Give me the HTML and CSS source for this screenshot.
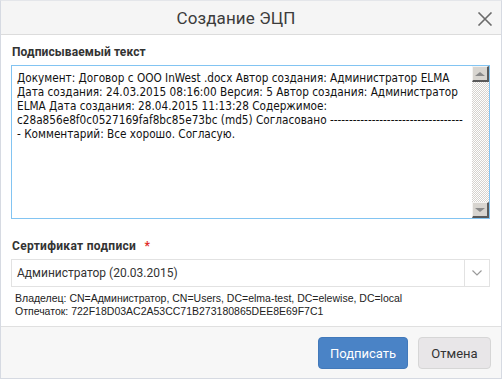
FILE: index.html
```html
<!DOCTYPE html>
<html lang="ru">
<head>
    <meta charset="UTF-8">
    <title>Создание ЭЦП</title>
    <link rel="stylesheet" href="styles.css">
</head>
<body>
    <div class="dialog">
        <div class="dialog-header">
            <span class="dialog-title">Создание ЭЦП</span>
            <svg class="close" width="16" height="14" viewBox="0 0 16 14">
                <path d="M1.5 0.5 L14.5 13.5 M14.5 0.5 L1.5 13.5" stroke="#6b6b6b" stroke-width="1.6" fill="none"/>
            </svg>
        </div>
        <div class="dialog-body">
            <div class="field-label">Подписываемый текст</div>
            <div class="memo">
                <div class="memo-text">
                    <div class="memo-line">Документ: Договор с ООО InWest .docx Автор создания: Администратор ELMA</div>
                    <div class="memo-line">Дата создания: 24.03.2015 08:16:00 Версия: 5 Автор создания: Администратор</div>
                    <div class="memo-line">ELMA Дата создания: 28.04.2015 11:13:28 Содержимое:</div>
                    <div class="memo-line">c28a856e8f0c0527169faf8bc85e73bc (md5) Согласовано -----------------------------------</div>
                    <div class="memo-line">- Комментарий: Все хорошо. Согласую.</div>
                </div>
                <div class="scrollbar">
                    <div class="scroll-btn"><span class="arrow-up"></span></div>
                    <div class="scroll-track"></div>
                    <div class="scroll-btn"><span class="arrow-down"></span></div>
                </div>
            </div>

            <div class="field-label cert-label">Сертификат подписи <span class="required">*</span></div>
            <div class="select">
                <div class="select-value">Администратор (20.03.2015)</div>
                <div class="select-toggle">
                    <svg width="10" height="6" viewBox="0 0 10 6">
                        <path d="M0.5 0.5 L5 5 L9.5 0.5" stroke="#9a9a9a" stroke-width="1.2" fill="none"/>
                    </svg>
                </div>
            </div>
            <div class="cert-info">
                <div>Владелец: CN=Администратор, CN=Users, DC=elma-test, DC=elewise, DC=local</div>
                <div>Отпечаток: 722F18D03AC2A53CC71B273180865DEE8E69F7C1</div>
            </div>
        </div>
        <div class="dialog-footer">
            <button class="btn btn-primary">Подписать</button>
            <button class="btn btn-default">Отмена</button>
        </div>
    </div>
</body>
</html>
```

FILE: styles.css
```css
* {
    margin: 0;
    padding: 0;
    box-sizing: border-box;
}

body {
    width: 502px;
    height: 380px;
    background: #fff;
    font-family: Roboto, "Liberation Sans", sans-serif;
    color: #333;
    overflow: hidden;
}

.dialog {
    width: 502px;
    height: 379px;
    border: 1px solid #d6dae2;
    border-top-color: #e4e6ea;
    display: flex;
    flex-direction: column;
    background: #fff;
}

.dialog-header {
    height: 34px;
    flex: none;
    background: #f5f5f5;
    border-bottom: 1px solid #dcdcdc;
    display: flex;
    align-items: center;
    justify-content: center;
    position: relative;
    padding-right: 30px;
}

.dialog-title {
    font-size: 17px;
    color: #3c3c3c;
    letter-spacing: 0.1px;
}

.close {
    position: absolute;
    right: 8px;
    top: 11px;
}

.dialog-body {
    flex: 1;
    padding: 10px 11px 0 10px;
}

.field-label {
    font-size: 12px;
    font-weight: bold;
    color: #333;
    height: 20px;
    padding-left: 1px;
    letter-spacing: 0.1px;
}

.memo {
    height: 154px;
    border: 1px solid #82c4f2;
    display: flex;
}

.memo-text {
    flex: 1;
    min-width: 0;
    padding: 5px 0 0 5px;
    font-family: "DejaVu Sans Condensed", "DejaVu Sans", sans-serif;
    font-size: 11.7px;
    line-height: 14px;
    color: #111;
}

.memo-line {
    white-space: nowrap;
}

.scrollbar {
    width: 17px;
    flex: none;
    display: flex;
    flex-direction: column;
}

.scroll-track {
    flex: 1;
    background-color: #fff;
    background-image: repeating-conic-gradient(#d6d3ce 0 25%, #fff 0 50%);
    background-size: 2px 2px;
}

.scroll-btn {
    height: 16px;
    background: #d8d5d0;
    border-top: 1px solid #f4f3f1;
    border-left: 1px solid #f4f3f1;
    border-right: 2px solid #5a5a5a;
    border-bottom: 2px solid #5a5a5a;
    display: flex;
    align-items: center;
    justify-content: center;
}

.arrow-up {
    width: 0;
    height: 0;
    border-left: 5px solid transparent;
    border-right: 5px solid transparent;
    border-bottom: 4px solid #8a8a8a;
}

.arrow-down {
    width: 0;
    height: 0;
    border-left: 5px solid transparent;
    border-right: 5px solid transparent;
    border-top: 4px solid #8a8a8a;
}

.cert-label {
    margin-top: 20px;
    letter-spacing: 0.3px;
}

.required {
    color: #e02b27;
    margin-left: 5px;
}

.select {
    height: 28px;
    border: 1px solid #e2e2e2;
    display: flex;
    align-items: center;
}

.select-value {
    flex: 1;
    padding-left: 5px;
    font-size: 12px;
    color: #333;
}

.select-toggle {
    width: 25px;
    height: 100%;
    border-left: 1px solid #e2e2e2;
    display: flex;
    align-items: center;
    justify-content: center;
}

.cert-info {
    padding: 5px 0 0 4px;
    font-family: "Liberation Sans", Arial, sans-serif;
    font-size: 10.5px;
    line-height: 13px;
    color: #222;
}

.dialog-footer {
    height: 52px;
    flex: none;
    background: #f7f7f7;
    border-top: 1px solid #e0e0e0;
    display: flex;
    justify-content: flex-end;
    align-items: flex-start;
    gap: 10px;
    padding: 10px 10px 0 0;
}

.btn {
    height: 32px;
    border-radius: 4px;
    font-family: Roboto, "Liberation Sans", sans-serif;
    font-size: 13px;
    cursor: pointer;
}

.btn-primary {
    width: 90px;
    background: #4a83c6;
    border: 1px solid #4279ba;
    color: #fff;
}

.btn-default {
    width: 73px;
    background: #e8e6e8;
    border: 1px solid #d6d6d6;
    color: #333;
}
```
